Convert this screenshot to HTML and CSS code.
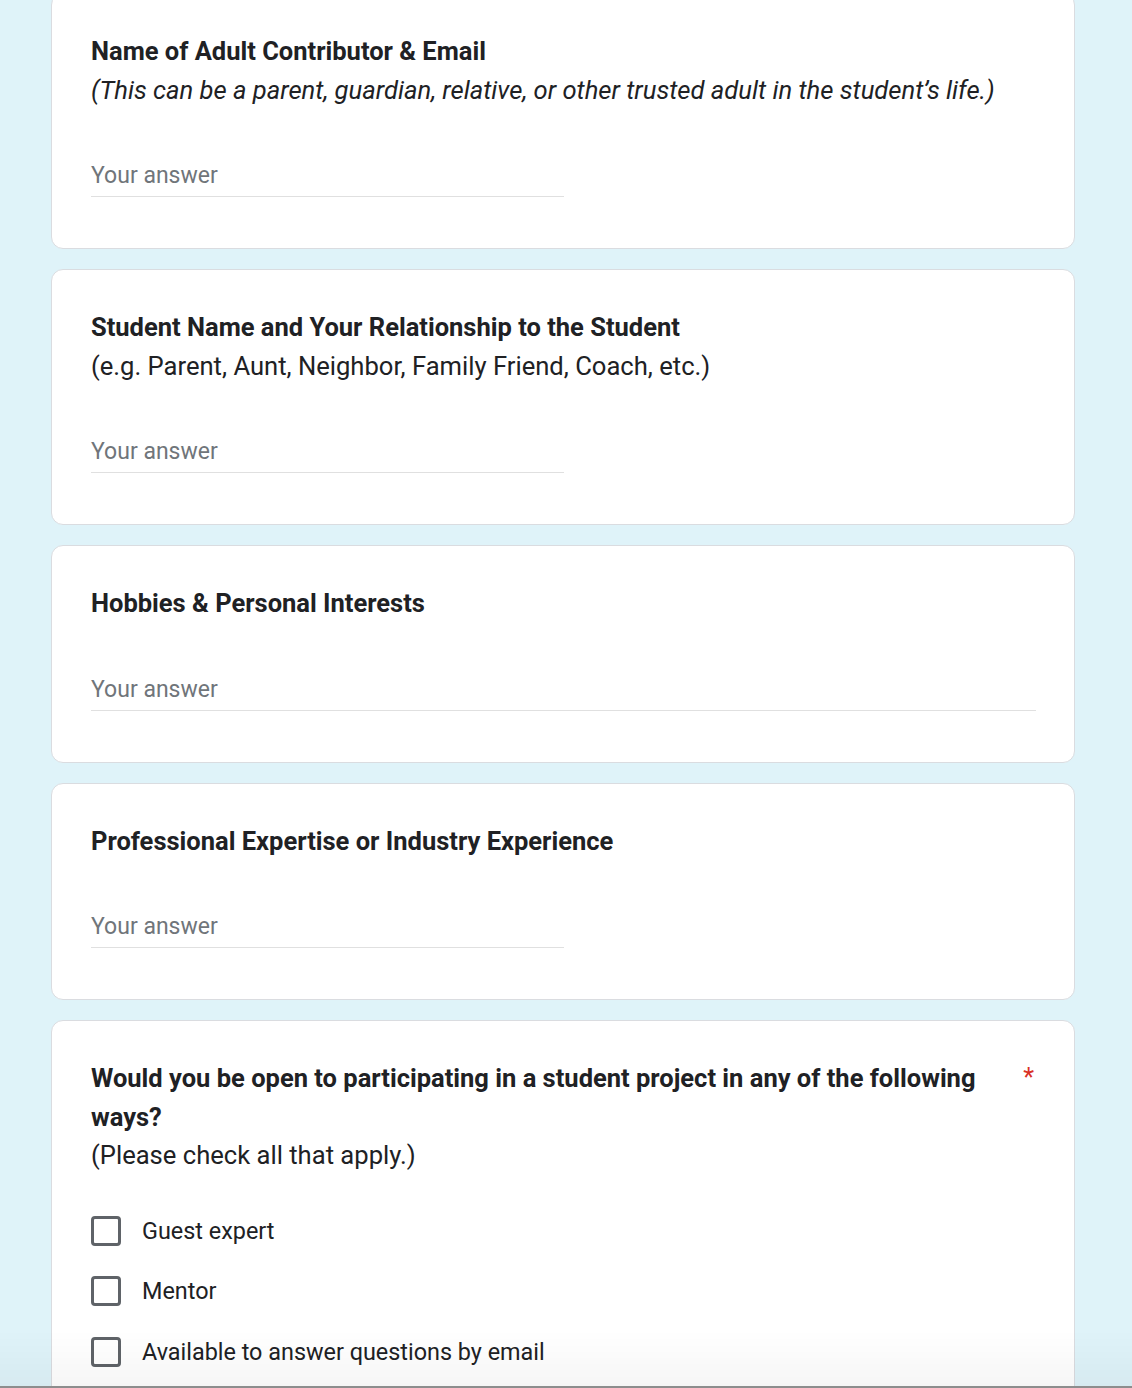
FILE: index.html
```html
<!DOCTYPE html>
<html lang="en">
<head>
<meta charset="utf-8">
<title>Form</title>
<link rel="stylesheet" href="styles.css">
</head>
<body>
<main class="form">
  <section class="card card-first">
    <div class="q-head">
      <div class="q-title">Name of Adult Contributor &amp; Email</div>
      <div class="q-desc q-desc-italic">(This can be a parent, guardian, relative, or other trusted adult in the student’s life.)</div>
    </div>
    <div class="answer half"><span class="placeholder">Your answer</span></div>
  </section>

  <section class="card">
    <div class="q-head">
      <div class="q-title">Student Name and Your Relationship to the Student</div>
      <div class="q-desc">(e.g. Parent, Aunt, Neighbor, Family Friend, Coach, etc.)</div>
    </div>
    <div class="answer half"><span class="placeholder">Your answer</span></div>
  </section>

  <section class="card">
    <div class="q-head">
      <div class="q-title">Hobbies &amp; Personal Interests</div>
    </div>
    <div class="answer full"><span class="placeholder">Your answer</span></div>
  </section>

  <section class="card">
    <div class="q-head">
      <div class="q-title">Professional Expertise or Industry Experience</div>
    </div>
    <div class="answer half"><span class="placeholder">Your answer</span></div>
  </section>

  <section class="card card-last">
    <div class="q-head">
      <div class="q-title-row">
        <div class="q-title">Would you be open to participating in a student project in any of the following ways?</div>
        <span class="required">*</span>
      </div>
      <div class="q-desc">(Please check all that apply.)</div>
    </div>
    <div class="options">
      <label class="option"><span class="box"></span><span class="opt-label">Guest expert</span></label>
      <label class="option"><span class="box"></span><span class="opt-label">Mentor</span></label>
      <label class="option"><span class="box"></span><span class="opt-label">Available to answer questions by email</span></label>
    </div>
  </section>
</main>
<div class="bottom-shade"></div>
</body>
</html>
```

FILE: styles.css
```css
html, body {
  margin: 0;
  padding: 0;
}
body {
  background: #dff3f9;
  font-family: Roboto, "Liberation Sans", Arial, sans-serif;
  color: #202124;
  overflow: hidden;
  height: 1388px;
}
.form {
  width: 1024px;
  margin-left: 51px;
  margin-top: -7px;
  display: flex;
  flex-direction: column;
  gap: 20px;
}
.card {
  background: #fff;
  border: 1px solid #dadce0;
  border-radius: 12px;
  padding: 38px 38px 51px 39px;
}
.card-last {
  padding-bottom: 60px;
}
.q-head {
  display: flex;
  flex-direction: column;
}
.q-title-row {
  display: flex;
  justify-content: space-between;
  gap: 30px;
}
.q-title {
  font-size: 25.5px;
  font-weight: 700;
  line-height: 38.5px;
}
.required {
  color: #d93025;
  font-size: 25px;
  line-height: 38.5px;
  padding-right: 2px;
}
.q-desc {
  font-size: 25.6px;
  font-weight: 400;
  line-height: 38.5px;
}
.q-desc-italic {
  font-style: italic;
}
.answer {
  margin-top: 49px;
  height: 39px;
  padding-bottom: 3px;
  border-bottom: 1px solid #e0e0e0;
  box-sizing: border-box;
  display: flex;
  align-items: center;
}
.answer.half {
  width: 50%;
}
.answer.full {
  width: 100%;
}
.placeholder {
  font-size: 23px;
  color: #70757a;
}
.options {
  margin-top: 40px;
  display: flex;
  flex-direction: column;
  gap: 28.5px;
}
.option {
  display: flex;
  align-items: center;
  height: 32px;
  gap: 21px;
}
.box {
  width: 30px;
  height: 30px;
  box-sizing: border-box;
  border: 3px solid #5f6368;
  border-radius: 4px;
  flex: none;
}
.opt-label {
  font-size: 23.4px;
  color: #202124;
}
.bottom-shade {
  position: fixed;
  left: 0;
  right: 0;
  bottom: 0;
  height: 56px;
  background: linear-gradient(to bottom, rgba(0,0,0,0), rgba(0,0,0,0.035));
  border-bottom: 2px solid #8d8d8d;
  pointer-events: none;
}
```
